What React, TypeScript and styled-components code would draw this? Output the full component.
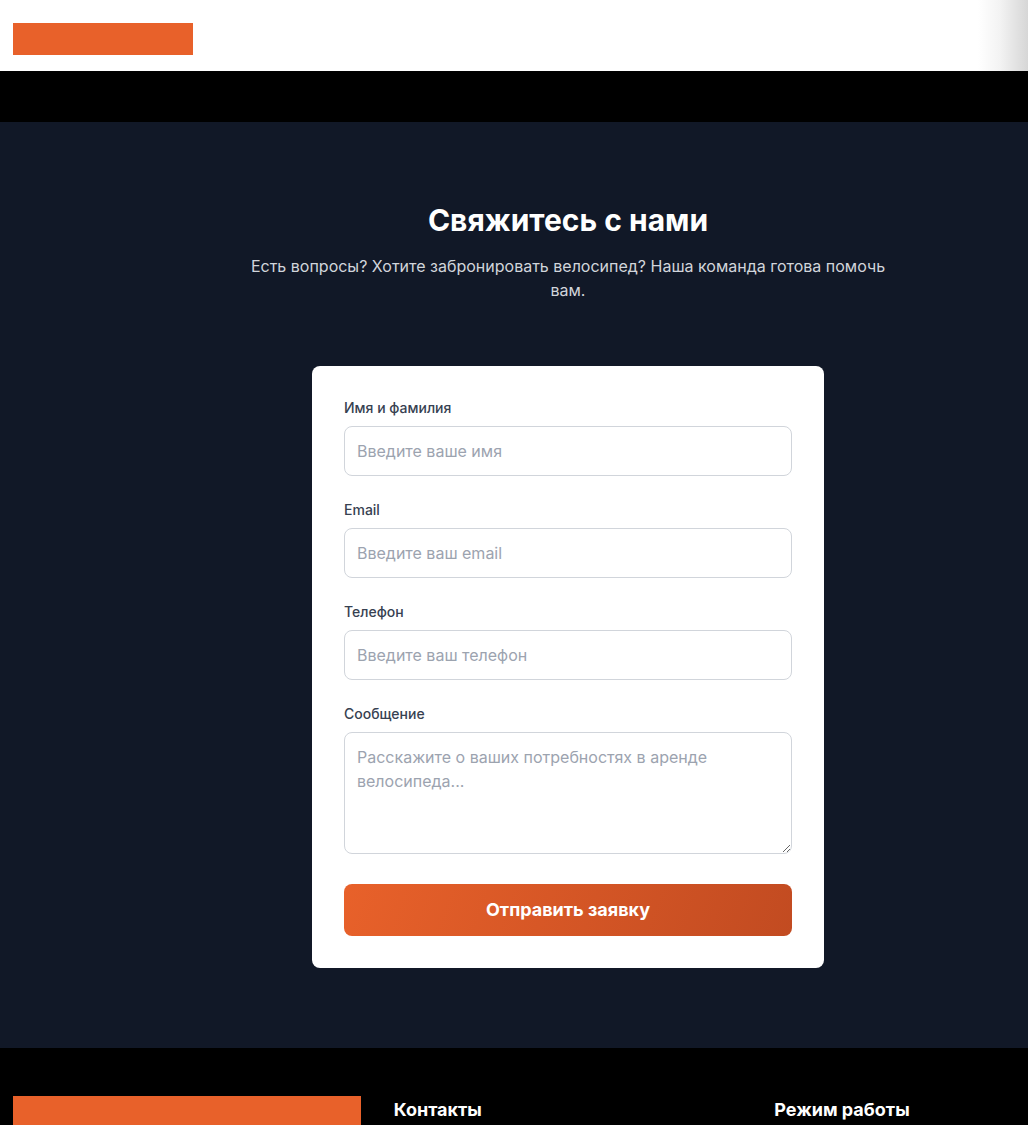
import React from "react";
import styled, { createGlobalStyle } from "styled-components";

const GlobalStyle = createGlobalStyle`
  html { overflow-x: hidden; scrollbar-width: none; }
  html::-webkit-scrollbar { display: none; }
  body {
    margin: 0;
    font-family: Inter, "Noto Sans", "Liberation Sans", sans-serif;
    background: #000;
    overflow-x: hidden;
  }
  * { box-sizing: border-box; }
`;

const Page = styled.div`
  width: 1136px;
`;

const Header = styled.header`
  height: 71px;
  padding: 23px 13px 0;
  background: linear-gradient(to right, #ffffff 978px, #f3f3f3 1000px, #d6d6d6 1028px, #d6d6d6 100%);
`;

const LogoBlock = styled.div<{ $w: number; $h: number }>`
  width: ${(p) => p.$w}px;
  height: ${(p) => p.$h}px;
  background: #e8612a;
`;

const NavStrip = styled.div`
  height: 51px;
  background: #000;
`;

const ContactSection = styled.section`
  background: #111827;
  padding: 80px 16px;
  display: flex;
  flex-direction: column;
  align-items: center;
`;

const Title = styled.h2`
  margin: 0 0 16px;
  font-size: 30px;
  line-height: 36px;
  font-weight: 700;
  color: #ffffff;
  text-align: center;
`;

const Subtitle = styled.p`
  margin: 0 0 64px;
  max-width: 648px;
  font-size: 16px;
  line-height: 24px;
  color: #d1d5db;
  text-align: center;
`;

const Card = styled.form`
  width: 512px;
  background: #ffffff;
  border-radius: 8px;
  padding: 32px;
  display: flex;
  flex-direction: column;
  gap: 24px;
`;

const Field = styled.div`
  display: flex;
  flex-direction: column;
`;

const Label = styled.label`
  font-size: 14px;
  line-height: 20px;
  font-weight: 500;
  color: #374151;
  margin-bottom: 8px;
`;

const inputBase = `
  width: 100%;
  border: 1px solid #d1d5db;
  border-radius: 8px;
  padding: 12px;
  font-family: Inter, "Noto Sans", "Liberation Sans", sans-serif;
  font-size: 16px;
  line-height: 24px;
  color: #111827;
  background: #fff;
  outline: none;
  &::placeholder { color: #9ca3af; }
`;

const Input = styled.input`
  ${inputBase}
  height: 50px;
`;

const TextArea = styled.textarea`
  ${inputBase}
  display: block;
  height: 122px;
  resize: vertical;
`;

const SubmitButton = styled.button`
  margin-top: 6px;
  height: 52px;
  border: none;
  border-radius: 8px;
  background: linear-gradient(110deg, #e8612a 0%, #c24b21 100%);
  color: #ffffff;
  font-family: Inter, "Noto Sans", "Liberation Sans", sans-serif;
  font-size: 18px;
  line-height: 28px;
  font-weight: 700;
  cursor: pointer;
`;

const Footer = styled.footer`
  background: #000;
  padding: 48px 13px 48px;
  display: grid;
  grid-template-columns: repeat(3, 1fr);
  gap: 32px;
`;

const FooterColumn = styled.div`
  display: flex;
  flex-direction: column;
  gap: 16px;
`;

const FooterHeading = styled.h3`
  margin: 0;
  font-size: 18px;
  line-height: 28px;
  font-weight: 700;
  color: #ffffff;
`;

const fields = [
  { id: "name", label: "Имя и фамилия", placeholder: "Введите ваше имя", type: "text" },
  { id: "email", label: "Email", placeholder: "Введите ваш email", type: "email" },
  { id: "phone", label: "Телефон", placeholder: "Введите ваш телефон", type: "tel" },
];

export default function App() {
  return (
    <Page>
      <GlobalStyle />
      <Header>
        <LogoBlock $w={180} $h={32} />
      </Header>
      <NavStrip />
      <ContactSection>
        <Title>Свяжитесь с нами</Title>
        <Subtitle>
          Есть вопросы? Хотите забронировать велосипед? Наша команда готова помочь вам.
        </Subtitle>
        <Card onSubmit={(e) => e.preventDefault()}>
          {fields.map((f) => (
            <Field key={f.id}>
              <Label htmlFor={f.id}>{f.label}</Label>
              <Input id={f.id} type={f.type} placeholder={f.placeholder} />
            </Field>
          ))}
          <Field>
            <Label htmlFor="message">Сообщение</Label>
            <TextArea
              id="message"
              rows={4}
              placeholder="Расскажите о ваших потребностях в аренде велосипеда..."
            />
          </Field>
          <SubmitButton type="submit">Отправить заявку</SubmitButton>
        </Card>
      </ContactSection>
      <Footer>
        <FooterColumn>
          <LogoBlock $w={348} $h={40} />
        </FooterColumn>
        <FooterColumn>
          <FooterHeading>Контакты</FooterHeading>
        </FooterColumn>
        <FooterColumn>
          <FooterHeading>Режим работы</FooterHeading>
        </FooterColumn>
      </Footer>
    </Page>
  );
}
